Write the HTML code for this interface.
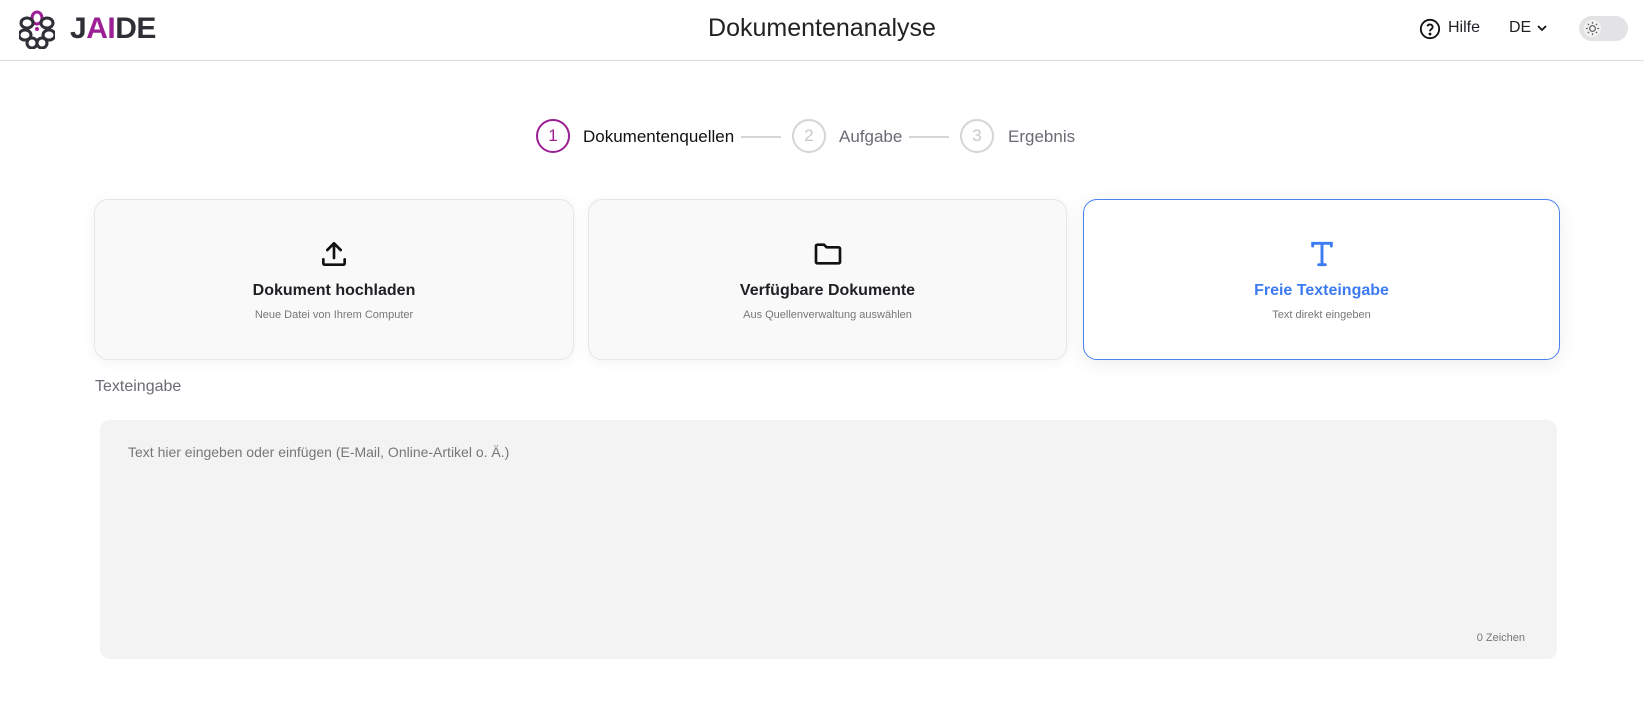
<!DOCTYPE html>
<html><head><meta charset="utf-8"><style>
*{box-sizing:border-box;margin:0;padding:0}
body{width:1644px;height:708px;background:#fff;font-family:"Liberation Sans",sans-serif;color:#1f1f24;position:relative;overflow:hidden}
.abs{position:absolute}
header{position:absolute;left:0;top:0;width:1644px;height:61px;border-bottom:1px solid #dcdcdf}
.card{position:absolute;top:199px;height:161px;border:1px solid #e6e6e8;border-radius:14px;background:#f9f9f9;box-shadow:0 2px 14px rgba(0,0,0,.05);text-align:center}
.card .t{position:absolute;left:0;right:0;top:82px;font-size:16px;font-weight:bold}
.card .s{position:absolute;left:0;right:0;top:109px;font-size:11px;color:#777}
.card svg{position:absolute;left:50%;top:38px;margin-left:-16px}
.circ{position:absolute;width:34px;height:34px;border-radius:50%;border:2px solid #d5d5d8;color:#c8c8cc;font-size:17px;text-align:center;line-height:30px;top:119px}
.step{position:absolute;top:127px;font-size:17px;color:#6b6b75}
.line{position:absolute;top:136px;height:2px;background:#d5d5d8;width:40px}
</style></head><body>
<header>
<svg class="abs" style="left:19px;top:9px" width="36" height="40" viewBox="0 0 36 40" fill="none" stroke="#2f2f38" stroke-width="3">
<ellipse cx="18" cy="9" rx="5" ry="6" stroke="#9c1f95"/>
<ellipse cx="8" cy="14" rx="6" ry="5"/><ellipse cx="28" cy="14" rx="6" ry="5"/>
<ellipse cx="6" cy="26" rx="6" ry="5"/><ellipse cx="30" cy="26" rx="6" ry="5"/>
<ellipse cx="13" cy="34" rx="5" ry="5"/><ellipse cx="23" cy="34" rx="5" ry="5"/>
<circle cx="18" cy="20" r="2" fill="#9c1f95" stroke="none"/>
</svg>
<div class="abs" style="left:70px;top:12px;font-size:30px;font-weight:bold;letter-spacing:-0.5px;color:#2f2f38">J<span style="color:#9c1f95">AI</span>DE</div>
<div class="abs" style="left:0;width:1644px;text-align:center;top:14px;font-size:25px;color:#222">Dokumentenanalyse</div>
<svg class="abs" style="left:1419px;top:18px" width="22" height="22" viewBox="0 0 24 24" fill="none" stroke="#111" stroke-width="2"><circle cx="12" cy="12" r="10"/><path d="M9.1 9a3 3 0 0 1 5.8 1c0 2-3 2.5-3 4.5"/><circle cx="12" cy="17.5" r=".6" fill="#111"/></svg>
<div class="abs" style="left:1448px;top:19px;font-size:16px">Hilfe</div>
<div class="abs" style="left:1509px;top:19px;font-size:16px">DE</div>
<svg class="abs" style="left:1536px;top:23px" width="12" height="10" viewBox="0 0 12 10" fill="none" stroke="#111" stroke-width="1.8"><path d="M2 3l4 4 4-4"/></svg>
<div class="abs" style="left:1579px;top:16px;width:49px;height:25px;border-radius:13px;background:#e3e3e5"></div>
<svg class="abs" style="left:1583px;top:19px" width="19" height="19" viewBox="0 0 20 20" fill="none" stroke="#666" stroke-width="1.3"><circle cx="10" cy="10" r="9" fill="#f3f3f3" stroke="none"/><circle cx="10" cy="10" r="3"/><path d="M10 3v2M10 15v2M3 10h2M15 10h2M5 5l1.4 1.4M13.6 13.6L15 15M5 15l1.4-1.4M13.6 6.4L15 5"/></svg>
</header>

<div class="circ" style="left:536px;border-color:#9c1f95;color:#9c1f95">1</div>
<div class="step" style="left:583px;color:#111">Dokumentenquellen</div>
<div class="line" style="left:741px"></div>
<div class="circ" style="left:792px">2</div>
<div class="step" style="left:839px">Aufgabe</div>
<div class="line" style="left:909px"></div>
<div class="circ" style="left:960px">3</div>
<div class="step" style="left:1008px">Ergebnis</div>

<div class="card" style="left:94px;width:480px">
<svg width="32" height="32" viewBox="0 0 24 24" fill="none" stroke="#111" stroke-width="2" stroke-linecap="round" stroke-linejoin="round"><path d="M4 16v3a1 1 0 0 0 1 1h14a1 1 0 0 0 1-1v-3M12 15V4M7 9l5-5 5 5"/></svg>
<div class="t">Dokument hochladen</div><div class="s">Neue Datei von Ihrem Computer</div></div>
<div class="card" style="left:588px;width:479px">
<svg width="32" height="32" viewBox="0 0 24 24" fill="none" stroke="#111" stroke-width="2" stroke-linejoin="round"><path d="M3 6a1 1 0 0 1 1-1h5l2 2h9a1 1 0 0 1 1 1v10a1 1 0 0 1-1 1H4a1 1 0 0 1-1-1z"/></svg>
<div class="t">Verfügbare Dokumente</div><div class="s">Aus Quellenverwaltung auswählen</div></div>
<div class="card" style="left:1083px;width:477px;background:#fff;border-color:#4a82f0;box-shadow:0 4px 20px rgba(0,0,0,.07)">
<svg width="32" height="32" viewBox="0 0 24 24" fill="none" stroke="#3d7bf2" stroke-width="2.2" stroke-linecap="round"><path d="M5 6V4h14v2M12 4v16M9.5 20h5"/></svg>
<div class="t" style="color:#3d7bf2">Freie Texteingabe</div><div class="s">Text direkt eingeben</div></div>

<div class="abs" style="left:95px;top:378px;font-size:16px;color:#6b6b75">Texteingabe</div>
<div class="abs" style="left:100px;top:420px;width:1457px;height:239px;background:#f3f3f4;border-radius:10px">
<div class="abs" style="left:28px;top:24px;font-size:14px;color:#777">Text hier eingeben oder einfügen (E-Mail, Online-Artikel o. Ä.)</div>
<div class="abs" style="right:32px;top:212px;font-size:11px;color:#777">0 Zeichen</div>
</div>
</body></html>
